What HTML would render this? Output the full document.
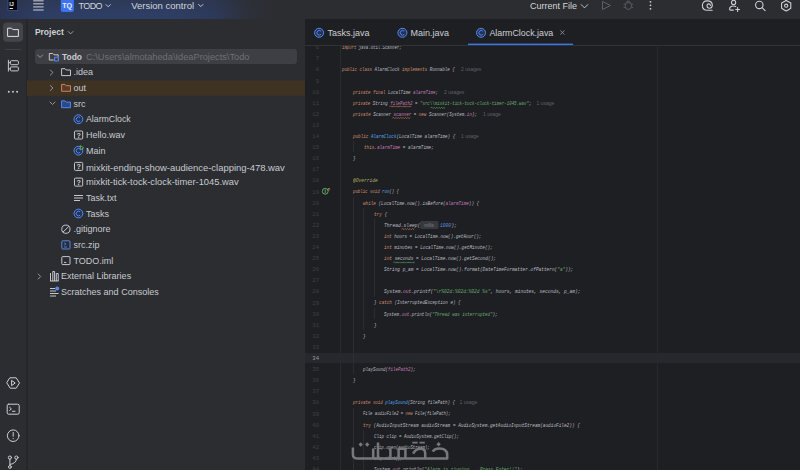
<!DOCTYPE html>
<html><head><meta charset="utf-8">
<style>
*{box-sizing:border-box;margin:0;padding:0}
html,body{width:800px;height:470px;overflow:hidden;background:#1e1f22;font-family:"Liberation Sans",sans-serif;position:relative}
.abs{position:absolute}
#hdr{left:0;top:0;width:800px;height:18.5px;background:#2b2d30;overflow:hidden}
#hdrgrad{left:0;top:0;width:800px;height:18.5px;background:linear-gradient(to bottom,rgba(43,45,48,0.25),rgba(43,45,48,0) 70%),linear-gradient(to right,#2a3452 0px,#2e3d63 40px,#2e3e64 170px,#2d3959 215px,#2c3039 250px,#2b2d30 275px)}
.htxt{font-size:9px;color:#d3d5da;white-space:pre;line-height:12px}
#strip{left:0;top:18.5px;width:26px;height:452px;background:#2b2d30}
#stripb{left:26px;top:18.5px;width:2px;height:452px;background:#26272b}
#proj{left:28px;top:18.5px;width:277px;height:452px;background:#2b2d30}
#projb{display:none}
.row{position:absolute;left:27px;width:277.5px;height:15.7px}
.tt{position:absolute;font-size:9px;color:#c8cbd0;white-space:pre;line-height:15.7px;margin-top:1px}
#tabs{left:305px;top:18.5px;width:495px;height:26.5px;background:#1e1f22}
#tabsb{left:305px;top:45px;width:495px;height:1px;background:#313236}
.tab{position:absolute;font-size:9px;color:#cdd0d5;white-space:pre;line-height:12px;top:27px}
#code{left:305px;top:45.5px;width:495px;height:425px;overflow:hidden}
.ln{position:absolute;font-family:"Liberation Mono",monospace;font-size:5.6px;color:#3e4147;text-align:right;width:20px;left:-6px;margin-top:0.1px;line-height:11.1px}
.cl{position:absolute;font-family:"Liberation Mono",monospace;font-size:5.8px;font-style:italic;color:#bcbec4;white-space:pre;line-height:11.1px;transform-origin:0 0}
.k{color:#cf8e6d}.s{color:#6aab73}.n{color:#5a93e0}.m{color:#56a8f5}.f{color:#c77dbb}.a{color:#b3ae60}.h{color:#6f737a;font-family:"Liberation Sans",sans-serif;font-size:4.8px;margin-left:5px}.hint{display:inline-block;font-family:"Liberation Sans",sans-serif;font-size:5.2px;color:#7d8188;background:#37393e;border-radius:2px;padding:0 5px;line-height:8.2px;margin:0 1.5px 0 0;vertical-align:middle;font-style:normal}.i{font-style:italic}.hh{position:absolute;font-family:"Liberation Sans",sans-serif;font-size:5px;color:#5d6168;line-height:11.1px;white-space:pre}
</style></head><body>
<div id="hdr" class="abs"><div id="hdrgrad" class="abs"></div>
<svg class="abs" style="left:0;top:0" width="800" height="19" viewBox="0 0 800 19">
 <rect x="7.6" y="-2" width="10.4" height="13" rx="1" fill="#3b5694"/>
 <rect x="8.5" y="-2" width="8.8" height="12.2" fill="#000"/>
 <text x="9.3" y="5.6" font-family="Liberation Sans" font-weight="bold" font-size="5.5" fill="#e8e8e8">IJ</text>
 <rect x="9.5" y="8" width="3.5" height="1" fill="#ddd"/>
 <g stroke="#b4b8c0" stroke-width="1.2">
  <line x1="33.2" y1="0.8" x2="43.6" y2="0.8"/><line x1="33.2" y1="3.8" x2="43.6" y2="3.8"/>
  <line x1="33.2" y1="6.9" x2="43.6" y2="6.9"/><line x1="33.2" y1="10" x2="43.6" y2="10"/>
 </g>
 <path d="M60.8 -2 H73.9 V9.9 Q73.9 11.9 71.9 11.9 H62.8 Q60.8 11.9 60.8 9.9 Z" fill="#3d73f0"/>
 <text x="62.2" y="8" font-family="Liberation Sans" font-weight="bold" font-size="7.8" fill="#e6ecff" textLength="10" lengthAdjust="spacingAndGlyphs">TQ</text>
 <g fill="none" stroke="#ced0d6" stroke-width="0.9" stroke-linecap="round" stroke-linejoin="round">
  <path d="M106 4.6 L108.2 6.8 L110.4 4.6"/>
  <path d="M198.6 4.4 L200.8 6.6 L203 4.4"/>
  <path d="M581.2 4.6 L584.5 7.9 L587.8 4.6"/>
 </g>
 <path d="M602.5 1.5 L610.5 5.5 L602.5 9.5 Z" fill="none" stroke="#5d6066" stroke-width="1" stroke-linejoin="round"/>
 <g fill="none" stroke="#5d6066" stroke-width="0.9">
  <path d="M625.4 4.6 Q625.4 2.6 628.4 2.6 Q631.4 2.6 631.4 4.6 V6.6 Q631.4 9.4 628.4 9.4 Q625.4 9.4 625.4 6.6 Z"/>
  <path d="M626.6 2.8 Q626.6 1 628.4 1 Q630.2 1 630.2 2.8"/>
  <path d="M623.6 4.2 H625.4 M631.4 4.2 H633.2 M623.6 7.4 H625.4 M631.4 7.4 H633.2"/>
 </g>
 <g fill="#ced0d6"><circle cx="650.5" cy="1.8" r="0.9"/><circle cx="650.5" cy="5.3" r="0.9"/><circle cx="650.5" cy="8.8" r="0.9"/></g>
 <g fill="none" stroke="#ced0d6" stroke-width="1.1" stroke-linecap="round">
  <path d="M712.2 10.3 H707.3 Q702.4 10.3 702.4 5.6 Q702.4 0.9 707.3 0.9 Q712.3 0.9 712.3 5.3 Q712.3 8.2 709.6 8.2 Q707 8.2 707 5.8 Q707 3.9 708.8 3.9 Q710.4 3.9 710.4 5.6"/>
  <circle cx="733.6" cy="2.4" r="2.1"/>
  <path d="M735.8 6.6 Q735 6 733.6 6 Q729.6 6 729.6 9.2 Q729.6 10.1 730.5 10.1 H733.3"/>
  <path d="M737.6 7.6 V11.4 M735.7 9.5 H739.5"/>
  <circle cx="759.3" cy="4.9" r="3.7"/>
  <path d="M762.1 7.7 L765.1 10.6"/>
 </g>
 <g fill="none" stroke="#ced0d6" stroke-width="1.1" stroke-linejoin="round">
  <path d="M786.20 0.40 L788.50 1.72 L790.79 3.05 L790.80 5.70 L790.79 8.35 L788.50 9.68 L786.20 11.00 L783.90 9.68 L781.61 8.35 L781.60 5.70 L781.61 3.05 L783.90 1.72 Z"/>
  <circle cx="786.2" cy="5.7" r="1.6"/>
 </g>
</svg>
<div class="abs htxt" style="left:78.6px;top:0px;letter-spacing:-0.65px">TODO</div>
<div class="abs htxt" style="left:131.2px;top:0px;font-size:9.5px">Version control</div>
<div class="abs htxt" style="left:530px;top:0px">Current File</div>
</div>
<div id="strip" class="abs"></div>
<div id="stripb" class="abs"></div>
<div id="proj" class="abs"></div>
<svg class="abs" style="left:0;top:0" width="305" height="470" viewBox="0 0 305 470">
 <rect x="3.1" y="22.4" width="19.9" height="19.4" rx="4" fill="#43454a"/>
 <path d="M7.6 28.2 H11.6 L12.8 29.6 H18.4 V36.4 H7.6 Z" fill="none" stroke="#dfe1e5" stroke-width="1" stroke-linejoin="round"/>
 <line x1="5.2" y1="49.5" x2="21" y2="49.5" stroke="#3e4045" stroke-width="1"/>
 <g fill="none" stroke="#ced0d6" stroke-width="0.95">
  <path d="M8.4 59.8 V71.5 M8.4 62.7 H10.4 M8.4 68.9 H10.4"/>
  <rect x="10.4" y="60.7" width="8" height="4" rx="1"/>
  <rect x="10.4" y="66.9" width="8" height="4" rx="1"/>
 </g>
 <g fill="#ced0d6"><circle cx="8.8" cy="91.7" r="0.95"/><circle cx="12.95" cy="91.7" r="0.95"/><circle cx="17.1" cy="91.7" r="0.95"/></g>
 <g fill="none" stroke="#ced0d6" stroke-width="1" stroke-linejoin="round" stroke-linecap="round">
  <path d="M10.2 377.8 H16.2 L19.5 383 L16.2 388.2 H10.2 L6.9 383 Z"/>
  <path d="M11.9 380.6 L15.2 383 L11.9 385.4 Z"/>
  <rect x="7.2" y="404.2" width="12" height="10" rx="1.5"/>
  <path d="M9.6 407.3 L11.4 408.9 L9.6 410.5 M12.5 411.3 H15"/>
  <circle cx="13.2" cy="435.7" r="5.8"/>
  <path d="M13.2 432.5 V436.3"/>
  <circle cx="9.9" cy="457.6" r="1.6"/><circle cx="16.4" cy="457.6" r="1.6"/><circle cx="9.9" cy="467" r="1.4"/><path d="M9.9 459.2 V465.6 M16.4 459.2 Q16.4 463.2 10.2 464.4"/>
 </g>
 <circle cx="13.2" cy="438.6" r="0.55" fill="#ced0d6"/>
</svg>
<div class="abs" style="left:34.9px;top:26.3px;font-size:8.5px;font-weight:bold;color:#cdd0d5;line-height:12px">Project</div>
<svg class="abs" style="left:0;top:0" width="305" height="470" viewBox="0 0 305 470">
 <path d="M68.2 31.5 L70.6 33.9 L73 31.5" fill="none" stroke="#a8abb0" stroke-width="0.9" stroke-linecap="round" stroke-linejoin="round"/>
 <rect x="35" y="48.9" width="262" height="15.2" rx="3" fill="#3d3f44"/>
 <rect x="27" y="80.4" width="278" height="15.4" fill="#3e3323"/>
 <g fill="none" stroke="#9a9ca1" stroke-width="0.95" stroke-linecap="round" stroke-linejoin="round">
  <path d="M37.6 55 L40.1 57.5 L42.6 55"/>
  <path d="M50.4 70 L52.9 72.5 L50.4 75"/>
  <path d="M50.4 85.5 L52.9 88 L50.4 90.5"/>
  <path d="M50 102 L52.5 104.5 L55 102"/>
  <path d="M38.2 274 L40.7 276.5 L38.2 279"/>
 </g>
 <path d="M49.3 60 V53.5 H52.8 L54 54.8 H58.2 V56.8" fill="none" stroke="#ced0d6" stroke-width="0.95" stroke-linejoin="round"/>
 <path d="M49.3 60 H53.6" stroke="#ced0d6" stroke-width="0.95"/>
 <rect x="54.6" y="57.2" width="3.8" height="3.8" rx="0.8" fill="none" stroke="#548af7" stroke-width="1.1"/>
 <path d="M61.6 68.7 H65 L66.2 70 H70.5 V75.6 H61.6 Z" fill="none" stroke="#ced0d6" stroke-width="0.95" stroke-linejoin="round"/>
 <path d="M61.6 84.4 H65 L66.2 85.7 H70.5 V91.3 H61.6 Z" fill="#5a3b2a" stroke="#d0875a" stroke-width="0.95" stroke-linejoin="round"/>
 <path d="M61.6 100.8 H65 L66.2 102.1 H70.5 V107.7 H61.6 Z" fill="#2b4a86" stroke="#548af7" stroke-width="0.95" stroke-linejoin="round"/>
 <g fill="#24314f" stroke="#548af7" stroke-width="1">
  <circle cx="78.4" cy="119.2" r="4.4"/><path fill="none" d="M80.2 117.6 A2.3 2.3 0 1 0 80.2 120.8"/>
  <circle cx="78.4" cy="150.7" r="4.4"/><path fill="none" d="M80.2 149.1 A2.3 2.3 0 1 0 80.2 152.3"/>
  <circle cx="78.4" cy="213.5" r="4.4"/><path fill="none" d="M80.2 211.9 A2.3 2.3 0 1 0 80.2 215.1"/>
 </g>
 <path d="M80.3 145.6 L83.6 147.8 L80.3 150 Z" fill="#2b2d30" stroke="#5fb865" stroke-width="0.9" stroke-linejoin="round"/>
 <g fill="none" stroke="#ced0d6" stroke-width="0.95">
  <rect x="74.5" y="131" width="8.2" height="8" rx="1"/>
  <rect x="74.5" y="162.4" width="8.2" height="8" rx="1"/>
  <rect x="74.5" y="178.1" width="8.2" height="8" rx="1"/>
  <path d="M74 195.5 H83 M74 198 H83 M74 200.5 H80"/>
  <circle cx="65.9" cy="229.2" r="4.1"/><path d="M63 232.1 L68.8 226.3"/>
  <rect x="61.8" y="256.6" width="8.2" height="8" rx="1"/><path d="M64 262.4 H66.3"/>
  <path d="M50 281 H58.6 M50.5 281 V273 M52.8 281 V271.5 H54.6 V281 M56.3 281 V273.5 L58.2 273.5 V281"/>
  <path d="M50 288.5 H55 M50 291 H56 M50 293.5 H58.6 M50 296 H56"/>
 </g>
 <g fill="#ced0d6" font-family="Liberation Sans" font-weight="bold" font-size="7.2">
  <text x="76.5" y="137.8">?</text><text x="76.5" y="169.2">?</text><text x="76.5" y="184.9">?</text>
 </g>
 <rect x="61.8" y="240.8" width="8.2" height="8.2" rx="1" fill="none" stroke="#548af7" stroke-width="0.95"/>
 <path d="M64.2 242.8 L66 244 L64.2 245.2 M64 247 H67" fill="none" stroke="#548af7" stroke-width="0.8"/>
 <circle cx="57.2" cy="288.4" r="2" fill="#548af7"/>
</svg>
<div class="abs tt" style="left:61.9px;top:48.65px;font-weight:bold;font-size:8.5px">Todo</div>
<div class="abs tt" style="left:86px;top:48.65px;color:#6c7076;font-size:9.25px">C:\Users\almotaheda\IdeaProjects\Todo</div>
<div class="abs tt" style="left:73.5px;top:64.35px">.idea</div>
<div class="abs tt" style="left:73.5px;top:80.05px">out</div>
<div class="abs tt" style="left:73.5px;top:95.75px">src</div>
<div class="abs tt" style="left:86px;top:111.45px;font-size:8.75px">AlarmClock</div>
<div class="abs tt" style="left:86px;top:127.15px">Hello.wav</div>
<div class="abs tt" style="left:86px;top:142.85px">Main</div>
<div class="abs tt" style="left:86px;top:158.55px;font-size:9.45px">mixkit-ending-show-audience-clapping-478.wav</div>
<div class="abs tt" style="left:86px;top:174.25px;font-size:9.35px">mixkit-tick-tock-clock-timer-1045.wav</div>
<div class="abs tt" style="left:86px;top:189.95px">Task.txt</div>
<div class="abs tt" style="left:86px;top:205.65px">Tasks</div>
<div class="abs tt" style="left:73.5px;top:221.35px">.gitignore</div>
<div class="abs tt" style="left:73.5px;top:237.05px">src.zip</div>
<div class="abs tt" style="left:73.5px;top:252.75px">TODO.iml</div>
<div class="abs tt" style="left:61.1px;top:268.45px">External Libraries</div>
<div class="abs tt" style="left:61.1px;top:284.15px">Scratches and Consoles</div>

<div id="projb" class="abs"></div>
<div id="tabs" class="abs"></div>
<svg class="abs" style="left:305px;top:18.5px" width="495" height="27" viewBox="305 18.5 495 27">
 <g fill="#24314f" stroke="#548af7" stroke-width="1">
  <circle cx="319.1" cy="32.3" r="4.5"/><path fill="none" d="M320.9 30.7 A2.3 2.3 0 1 0 320.9 33.9"/>
  <circle cx="402.4" cy="32.3" r="4.5"/><path fill="none" d="M404.2 30.7 A2.3 2.3 0 1 0 404.2 33.9"/>
  <circle cx="481" cy="32.3" r="4.5"/><path fill="none" d="M482.8 30.7 A2.3 2.3 0 1 0 482.8 33.9"/>
 </g>
 <path d="M560.6 30.2 L564.2 33.8 M564.2 30.2 L560.6 33.8" stroke="#8c8f94" stroke-width="0.9" stroke-linecap="round"/>
 <rect x="468" y="43.1" width="105" height="2.6" fill="#3a78f3"/>
</svg>
<div class="abs tab" style="left:327.6px;top:27px">Tasks.java</div>
<div class="abs tab" style="left:410.6px;top:27px">Main.java</div>
<div class="abs tab" style="left:489.4px;top:27px;font-size:8.85px">AlarmClock.java</div>
<div id="tabsb" class="abs"></div>
<div id="code" class="abs">
<div class="abs" style="left:0;top:307.20px;width:495px;height:10.8px;background:#26282e"></div>
<div class="abs" style="left:351.5px;top:0;width:1px;height:425px;background:#27282c"></div>
<div class="abs" style="left:35.2px;top:0;width:1px;height:425px;background:#292a2e"></div>
<div class="ln" style="top:-3.35px">6</div>
<div class="cl" style="top:-3.35px;left:37.45px;transform:scaleX(0.6856)"><span class="k">import</span> java.util.Scanner;</div>
<div class="ln" style="top:7.75px">7</div>
<div class="ln" style="top:18.85px">8</div>
<div class="cl" style="top:18.85px;left:37.45px;transform:scaleX(0.7200)"><span class="k">public class</span> AlarmClock <span class="k">implements</span> Runnable {</div>
<div class="ln" style="top:29.95px">9</div>
<div class="ln" style="top:41.05px">10</div>
<div class="cl" style="top:41.05px;left:47.90px;transform:scaleX(0.7175)"><span class="k">private final</span> LocalTime <span class="f">alarmTime</span>;</div>
<div class="ln" style="top:52.15px">11</div>
<div class="cl" style="top:52.15px;left:47.80px;transform:scaleX(0.7124)"><span class="k">private</span> String <span class="f">filePath2</span> = <span class="s">"src\\mixkit-tick-tock-clock-timer-1045.wav"</span>;</div>
<div class="ln" style="top:63.25px">12</div>
<div class="cl" style="top:63.25px;left:47.90px;transform:scaleX(0.7272)"><span class="k">private</span> Scanner <span class="f">scanner</span> = <span class="k">new</span> Scanner(System.<span class="f"><span class="i">in</span></span>);</div>
<div class="ln" style="top:74.35px">13</div>
<div class="ln" style="top:85.45px">14</div>
<div class="cl" style="top:85.45px;left:47.90px;transform:scaleX(0.7349)"><span class="k">public</span> <span class="m">AlarmClock</span>(LocalTime alarmTime) {</div>
<div class="ln" style="top:96.55px">15</div>
<div class="cl" style="top:96.55px;left:58.90px;transform:scaleX(0.7429)"><span class="k">this</span>.<span class="f">alarmTime</span> = alarmTime;</div>
<div class="ln" style="top:107.65px">16</div>
<div class="cl" style="top:107.65px;left:47.90px;transform:scaleX(0.7470)">}</div>
<div class="ln" style="top:118.75px">17</div>
<div class="ln" style="top:129.85px">18</div>
<div class="cl" style="top:129.85px;left:47.70px;transform:scaleX(0.7950)"><span class="a">@Override</span></div>
<div class="ln" style="top:140.95px">19</div>
<div class="cl" style="top:140.95px;left:47.70px;transform:scaleX(0.6957)"><span class="k">public void</span> <span class="m">run</span>() {</div>
<div class="ln" style="top:152.05px">20</div>
<div class="cl" style="top:152.05px;left:58.10px;transform:scaleX(0.7420)"><span class="k">while</span> (LocalTime.<span class="i">now</span>().isBefore(<span class="f">alarmTime</span>)) {</div>
<div class="ln" style="top:163.15px">21</div>
<div class="cl" style="top:163.15px;left:68.70px;transform:scaleX(0.7470)"><span class="k">try</span> {</div>
<div class="ln" style="top:174.25px">22</div>
<div class="cl" style="top:174.25px;left:78.90px;transform:scaleX(0.8031)">Thread.<span class="i">sleep</span>(<span class="hint">millis:</span><span class="n">1000</span>);</div>
<div class="ln" style="top:185.35px">23</div>
<div class="cl" style="top:185.35px;left:79.20px;transform:scaleX(0.7365)"><span class="k">int</span> hours = LocalTime.<span class="i">now</span>().getHour();</div>
<div class="ln" style="top:196.45px">24</div>
<div class="cl" style="top:196.45px;left:79.20px;transform:scaleX(0.7437)"><span class="k">int</span> minutes = LocalTime.<span class="i">now</span>().getMinute();</div>
<div class="ln" style="top:207.55px">25</div>
<div class="cl" style="top:207.55px;left:79.20px;transform:scaleX(0.7663)"><span class="k">int</span> seconds = LocalTime.<span class="i">now</span>().getSecond();</div>
<div class="ln" style="top:218.65px">26</div>
<div class="cl" style="top:218.65px;left:79.20px;transform:scaleX(0.7661)">String p_am = LocalTime.<span class="i">now</span>().format(DateTimeFormatter.<span class="i">ofPattern</span>(<span class="s">"a"</span>));</div>
<div class="ln" style="top:229.75px">27</div>
<div class="ln" style="top:240.85px">28</div>
<div class="cl" style="top:240.85px;left:79.20px;transform:scaleX(0.7842)">System.<span class="f"><span class="i">out</span></span>.printf(<span class="s">"\r%02d:%02d:%02d %s"</span>, hours, minutes, seconds, p_am);</div>
<div class="ln" style="top:251.95px">29</div>
<div class="cl" style="top:251.95px;left:68.80px;transform:scaleX(0.7319)">} <span class="k">catch</span> (InterruptedException e) {</div>
<div class="ln" style="top:263.05px">30</div>
<div class="cl" style="top:263.05px;left:79.20px;transform:scaleX(0.7254)">System.<span class="f"><span class="i">out</span></span>.println(<span class="s">"Thread was interrupted"</span>);</div>
<div class="ln" style="top:274.15px">31</div>
<div class="cl" style="top:274.15px;left:68.70px;transform:scaleX(0.7470)">}</div>
<div class="ln" style="top:285.25px">32</div>
<div class="cl" style="top:285.25px;left:58.30px;transform:scaleX(0.7470)">}</div>
<div class="ln" style="top:296.35px">33</div>
<div class="ln" style="top:307.45px;color:#9a9da3">34</div>
<div class="ln" style="top:318.55px">35</div>
<div class="cl" style="top:318.55px;left:58.10px;transform:scaleX(0.7184)">playSound(<span class="f">filePath2</span>);</div>
<div class="ln" style="top:329.65px">36</div>
<div class="cl" style="top:329.65px;left:47.90px;transform:scaleX(0.7470)">}</div>
<div class="ln" style="top:340.75px">37</div>
<div class="ln" style="top:351.85px">38</div>
<div class="cl" style="top:351.85px;left:47.70px;transform:scaleX(0.7142)"><span class="k">private void</span> <span class="m">playSound</span>(String filePath) {</div>
<div class="ln" style="top:362.95px">39</div>
<div class="cl" style="top:362.95px;left:58.10px;transform:scaleX(0.6803)">File audioFile2 = <span class="k">new</span> File(filePath);</div>
<div class="ln" style="top:374.05px">40</div>
<div class="cl" style="top:374.05px;left:58.10px;transform:scaleX(0.7601)"><span class="k">try</span> (AudioInputStream audioStream = AudioSystem.<span class="i">getAudioInputStream</span>(audioFile2)) {</div>
<div class="ln" style="top:385.15px">41</div>
<div class="cl" style="top:385.15px;left:68.80px;transform:scaleX(0.7184)">Clip clip = AudioSystem.<span class="i">getClip</span>();</div>
<div class="ln" style="top:396.25px">42</div>
<div class="cl" style="top:396.25px;left:68.80px;transform:scaleX(0.6972)">clip.open(audioStream);</div>
<div class="ln" style="top:407.35px">43</div>
<div class="cl" style="top:407.35px;left:68.80px;transform:scaleX(0.6211)">clip.start();</div>
<div class="ln" style="top:418.45px">44</div>
<div class="cl" style="top:418.45px;left:68.80px;transform:scaleX(0.7615)">System.<span class="f"><span class="i">out</span></span>.println(<span class="s">"Alarm is ringing... Press Enter!!"</span>);</div>
<div class="abs" style="left:47.5px;top:95.85px;width:0.8px;height:11.10px;background:#2c2d31"></div>
<div class="abs" style="left:47.5px;top:151.35px;width:0.8px;height:177.60px;background:#2c2d31"></div>
<div class="abs" style="left:57.9px;top:162.45px;width:0.8px;height:122.10px;background:#2c2d31"></div>
<div class="abs" style="left:68.5px;top:173.55px;width:0.8px;height:77.70px;background:#2c2d31"></div>
<div class="abs" style="left:68.5px;top:262.35px;width:0.8px;height:11.10px;background:#2c2d31"></div>
<div class="abs" style="left:47.5px;top:362.25px;width:0.8px;height:66.60px;background:#2c2d31"></div>
<div class="abs" style="left:57.9px;top:384.45px;width:0.8px;height:44.40px;background:#2c2d31"></div>
<svg class="abs" style="left:0;top:0" width="495" height="425" viewBox="305 45.5 495 425"><path d="M389.5 106.0 L390.7 105.4 L391.9 106.6 L393.1 105.4 L394.3 106.6 L395.5 105.4 L396.7 106.6 L397.9 105.4 L399.1 106.6 L400.3 105.4 L401.5 106.6 L402.7 105.4 L403.9 106.6 L405.1 105.4 L406.3 106.6 L407.5 105.4 L408.7 106.6 L409.9 105.4 L411.0 106.6" stroke="#b9744a" stroke-width="0.7" fill="none"/><path d="M430.8 107.4 L432.0 106.8 L433.2 108.0 L434.4 106.8 L435.6 108.0 L436.8 106.8 L438.0 108.0 L439.2 106.8 L440.4 108.0 L441.6 106.8 L442.8 108.0 L444.0 106.8 L444.5 108.0" stroke="#5a9e5e" stroke-width="0.7" fill="none"/><path d="M392.3 117.5 L393.5 116.9 L394.7 118.1 L395.9 116.9 L397.1 118.1 L398.3 116.9 L399.5 118.1 L400.7 116.9 L401.9 118.1 L403.1 116.9 L404.3 118.1 L405.5 116.9 L406.7 118.1 L407.9 116.9 L409.1 118.1 L410.0 116.9" stroke="#b9744a" stroke-width="0.7" fill="none"/><path d="M401.6 228.6 L402.8 228.0 L404.0 229.2 L405.2 228.0 L406.4 229.2 L407.6 228.0 L408.8 229.2 L410.0 228.0 L411.2 229.2 L412.4 228.0 L413.6 229.2 L414.0 228.0" stroke="#b9744a" stroke-width="0.7" fill="none"/><path d="M393.4 262.0 L394.6 261.4 L395.8 262.6 L397.0 261.4 L398.2 262.6 L399.4 261.4 L400.6 262.6 L401.8 261.4 L403.0 262.6 L404.2 261.4 L405.4 262.6 L406.6 261.4 L407.8 262.6 L409.0 261.4 L410.2 262.6 L411.4 261.4 L412.6 262.6 L413.8 261.4 L414.0 262.6" stroke="#5a9e5e" stroke-width="0.7" fill="none"/></svg>
<div class="hh" style="left:156.0px;top:18.85px">2 usages</div>
<div class="hh" style="left:139.0px;top:41.05px">2 usages</div>
<div class="hh" style="left:231.6px;top:52.15px">1 usage</div>
<div class="hh" style="left:178.0px;top:63.25px">1 usage</div>
<div class="hh" style="left:156.0px;top:85.45px">1 usage</div>
<div class="hh" style="left:154.6px;top:351.85px">1 usage</div>
</div>
<svg class="abs" style="left:0;top:0" width="800" height="470" viewBox="0 0 800 470">
 <g fill="none" stroke="#76787c" stroke-width="2.5" stroke-linejoin="round" stroke-linecap="butt">
  <path d="M352.9 447.6 V454.3 Q352.9 458.5 357.1 458.5 H447.2 V455"/>
  <path d="M373.2 448.4 V458.5 M378 442.4 V458.5"/>
  <path d="M390.4 448.4 V458.5"/>
  <path d="M398.6 458.5 V448.8 H405.4 V458.5"/>
  <path d="M413.2 453.6 Q415.5 448.7 420.5 448.7 Q425.2 448.7 425.2 453.2 V458.5"/>
  <path d="M432.6 451.5 Q435 448.6 439.2 448.6 Q447.2 448.6 447.2 455"/>
 </g>
 <g stroke="#76787c" stroke-width="1.8">
  <path d="M412.3 442.6 H417.6 M419.5 442.6 H424.8"/>
 </g>
 <g fill="#76787c">
  <path d="M360.7 442.3 L362.9 444.5 L360.7 446.7 L358.5 444.5 Z"/>
  <path d="M367.2 442.3 L369.4 444.5 L367.2 446.7 L365 444.5 Z"/>
  <path d="M438.6 442 L440.8 444.2 L438.6 446.4 L436.4 444.2 Z"/>
 </g>
</svg>
<svg class="abs" style="left:0;top:0" width="800" height="470" viewBox="0 0 800 470">
 <circle cx="325.2" cy="191.3" r="2.9" fill="none" stroke="#5fb865" stroke-width="0.9"/>
 <path d="M325.2 189.5 V193.1" stroke="#5fb865" stroke-width="0.9"/>
 <path d="M327.6 189.5 L328.8 188 L330 189.5 M328.8 188 V191" fill="none" stroke="#d0875a" stroke-width="0.7"/>
</svg>
</body></html>
